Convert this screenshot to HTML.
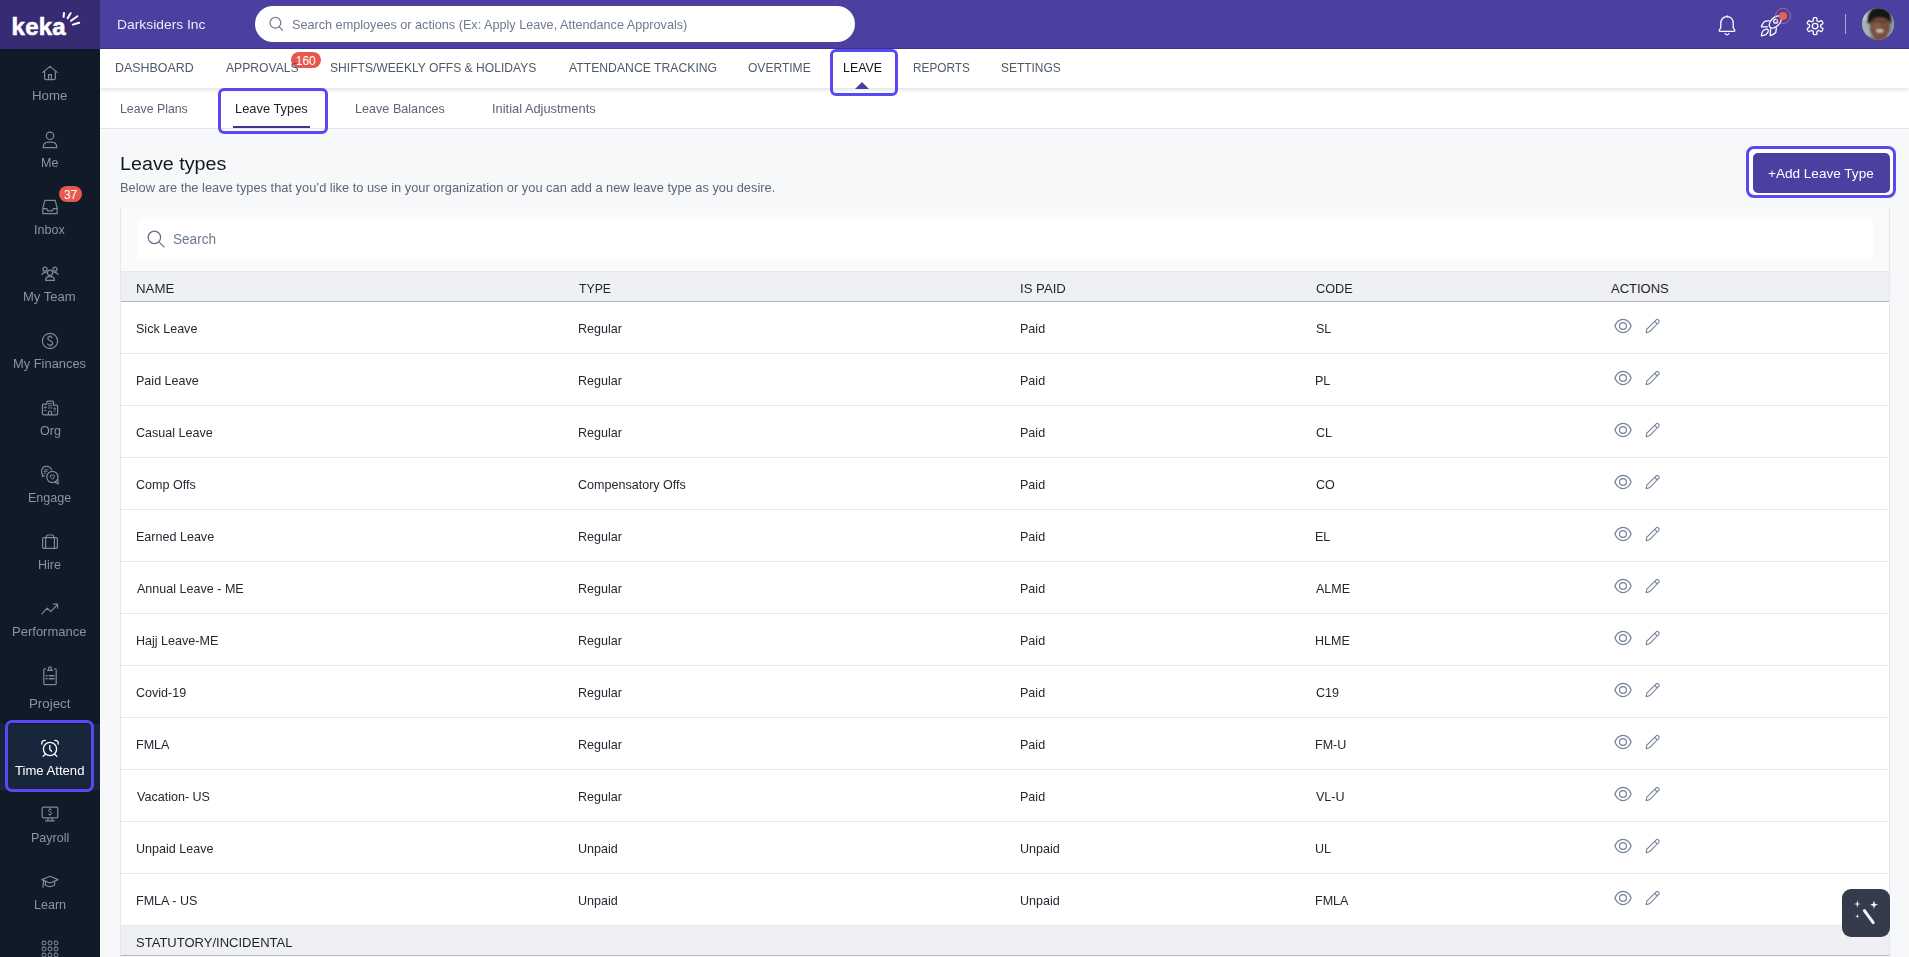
<!DOCTYPE html>
<html><head><meta charset="utf-8"><title>Keka - Leave Types</title>
<style>
html,body{margin:0;padding:0}
body{width:1909px;height:957px;overflow:hidden;position:relative;background:#f7f8fa;font-family:"Liberation Sans",sans-serif}
.a{position:absolute}
.t{position:absolute;white-space:nowrap;line-height:1;transform-origin:0 0;z-index:10}
.row{position:absolute;left:121px;width:1768px;height:51px;background:#fff;border-bottom:1px solid #e6e8ec}
.ic{position:absolute;overflow:visible}
.sb{position:absolute;overflow:visible}
</style></head><body>
<!-- ===== top bar ===== -->
<div class="a" style="left:0;top:0;width:100px;height:49px;background:#372c74;z-index:3"></div>
<div class="a" style="left:100px;top:0;width:1809px;height:48px;background:#4b3fa0;border-bottom:1px solid #3d3095;z-index:3"></div>
<!-- logo -->
<svg class="a" style="z-index:5;left:0;top:0" width="100" height="49" viewBox="0 0 100 49">
  <text x="11.6" y="35" font-family="Liberation Sans" font-weight="700" font-size="24" fill="#fff" stroke="#fff" stroke-width="0.6" letter-spacing="0.2">keka</text>
  <g stroke="#fff" stroke-width="2" stroke-linecap="round">
    <line x1="64" y1="13" x2="63.6" y2="16.8"/>
    <line x1="70.6" y1="13.2" x2="67.6" y2="18.2"/>
    <line x1="77.4" y1="16.2" x2="71" y2="20.8"/>
    <line x1="79.2" y1="22.8" x2="72.8" y2="24.6"/>
  </g>
</svg>
<!-- search -->
<div class="a" style="z-index:5;left:255px;top:6px;width:600px;height:36px;border-radius:18px;background:#fff"></div>
<svg class="a" style="z-index:5;left:266px;top:14px" width="22" height="22" viewBox="0 0 22 22">
  <circle cx="9.4" cy="8.8" r="5.4" fill="none" stroke="#6e7a8e" stroke-width="1.2"/>
  <line x1="13.3" y1="12.8" x2="16.6" y2="16.3" stroke="#6e7a8e" stroke-width="1.2" stroke-linecap="round"/>
</svg>
<!-- right icons -->
<svg class="a" style="z-index:5;left:1710px;top:8px" width="34" height="34" viewBox="0 0 34 34">
  <path d="M17 8.6 C12.6 8.6 10.8 12 10.8 15.6 L10.8 19.6 L9.4 22 Q8.6 23.4 10.2 23.4 L23.8 23.4 Q25.4 23.4 24.6 22 L23.2 19.6 L23.2 15.6 C23.2 12 21.4 8.6 17 8.6 Z" fill="none" stroke="#fff" stroke-width="1.3" stroke-linejoin="round"/>
  <path d="M15.2 25.6 Q17 28 18.8 25.6" fill="none" stroke="#fff" stroke-width="1.3" stroke-linecap="round"/>
  <line x1="17" y1="8" x2="17" y2="8.8" stroke="#fff" stroke-width="1.6" stroke-linecap="round"/>
</svg>
<svg class="a" style="z-index:5;left:1754px;top:4px" width="40" height="36" viewBox="0 0 40 36">
  <g fill="none" stroke="#fff" stroke-width="1.3" stroke-linejoin="round">
    <ellipse cx="21.3" cy="18" rx="7.4" ry="4.3" transform="rotate(-45 21.3 18)"/>
    <circle cx="21.6" cy="17.2" r="1.9"/>
    <path d="M15.6 16.6 L10.6 17.4 Q8.4 19.6 7.4 22.8 L13.8 22.8"/>
    <path d="M16.6 24.4 L16.2 31.6 Q19.4 30.6 21.8 28.4 L22.4 23.6"/>
    <path d="M7.4 31.8 C7.6 28.4 9.6 25.6 12.4 25.2 C14.2 25 14.6 26.6 14 28 C12.8 30.6 10.4 31.6 7.4 31.8 Z"/>
  </g>
  <circle cx="29" cy="11.9" r="7.6" fill="none" stroke="#e07575" stroke-opacity="0.7" stroke-width="1"/>
  <circle cx="29" cy="11.9" r="4" fill="#ec5f4f"/>
</svg>
<svg class="a" style="z-index:5;left:1801px;top:12px" width="28" height="28" viewBox="0 0 28 28">
  <path d="M14.10 5.65 L14.32 5.65 L14.54 5.66 L14.76 5.68 L14.98 5.71 L15.20 5.75 L15.41 5.81 L15.61 5.94 L15.78 6.18 L15.89 6.64 L15.91 7.34 L15.90 8.03 L15.92 8.49 L16.00 8.73 L16.11 8.86 L16.23 8.95 L16.36 9.02 L16.49 9.09 L16.62 9.15 L16.75 9.22 L16.88 9.29 L17.00 9.37 L17.12 9.44 L17.25 9.52 L17.37 9.60 L17.49 9.68 L17.63 9.74 L17.80 9.77 L18.05 9.72 L18.46 9.51 L19.05 9.15 L19.67 8.82 L20.12 8.68 L20.41 8.71 L20.62 8.82 L20.78 8.97 L20.93 9.14 L21.06 9.32 L21.19 9.50 L21.30 9.69 L21.42 9.88 L21.53 10.07 L21.63 10.26 L21.72 10.46 L21.81 10.67 L21.88 10.88 L21.93 11.09 L21.93 11.33 L21.80 11.60 L21.46 11.92 L20.86 12.29 L20.25 12.62 L19.87 12.87 L19.70 13.06 L19.64 13.22 L19.63 13.37 L19.63 13.52 L19.64 13.66 L19.64 13.81 L19.65 13.95 L19.65 14.10 L19.65 14.25 L19.64 14.39 L19.64 14.54 L19.63 14.68 L19.63 14.83 L19.64 14.98 L19.70 15.14 L19.87 15.33 L20.25 15.58 L20.86 15.91 L21.46 16.28 L21.80 16.60 L21.93 16.87 L21.93 17.11 L21.88 17.32 L21.81 17.53 L21.72 17.74 L21.63 17.94 L21.53 18.13 L21.42 18.32 L21.30 18.51 L21.19 18.70 L21.06 18.88 L20.93 19.06 L20.78 19.23 L20.62 19.38 L20.41 19.49 L20.12 19.52 L19.67 19.38 L19.05 19.05 L18.46 18.69 L18.05 18.48 L17.80 18.43 L17.63 18.46 L17.49 18.52 L17.37 18.60 L17.25 18.68 L17.12 18.76 L17.00 18.83 L16.88 18.91 L16.75 18.98 L16.62 19.05 L16.49 19.11 L16.36 19.18 L16.23 19.25 L16.11 19.34 L16.00 19.47 L15.92 19.71 L15.90 20.17 L15.91 20.86 L15.89 21.56 L15.78 22.02 L15.61 22.26 L15.41 22.39 L15.20 22.45 L14.98 22.49 L14.76 22.52 L14.54 22.54 L14.32 22.55 L14.10 22.55 L13.88 22.55 L13.66 22.54 L13.44 22.52 L13.22 22.49 L13.00 22.45 L12.79 22.39 L12.59 22.26 L12.42 22.02 L12.31 21.56 L12.29 20.86 L12.30 20.17 L12.28 19.71 L12.20 19.47 L12.09 19.34 L11.97 19.25 L11.84 19.18 L11.71 19.11 L11.58 19.05 L11.45 18.98 L11.33 18.91 L11.20 18.83 L11.08 18.76 L10.95 18.68 L10.83 18.60 L10.71 18.52 L10.57 18.46 L10.40 18.43 L10.15 18.48 L9.74 18.69 L9.15 19.05 L8.53 19.38 L8.08 19.52 L7.79 19.49 L7.58 19.38 L7.42 19.23 L7.27 19.06 L7.14 18.88 L7.01 18.70 L6.90 18.51 L6.78 18.33 L6.67 18.13 L6.57 17.94 L6.48 17.74 L6.39 17.53 L6.32 17.32 L6.27 17.11 L6.27 16.87 L6.40 16.60 L6.74 16.28 L7.34 15.91 L7.95 15.58 L8.33 15.33 L8.50 15.14 L8.56 14.98 L8.57 14.83 L8.57 14.68 L8.56 14.54 L8.56 14.39 L8.55 14.25 L8.55 14.10 L8.55 13.95 L8.56 13.81 L8.56 13.66 L8.57 13.52 L8.57 13.37 L8.56 13.22 L8.50 13.06 L8.33 12.87 L7.95 12.62 L7.34 12.29 L6.74 11.92 L6.40 11.60 L6.27 11.33 L6.27 11.09 L6.32 10.88 L6.39 10.67 L6.48 10.46 L6.57 10.26 L6.67 10.07 L6.78 9.88 L6.90 9.69 L7.01 9.50 L7.14 9.32 L7.27 9.14 L7.42 8.97 L7.58 8.82 L7.79 8.71 L8.08 8.68 L8.53 8.82 L9.15 9.15 L9.74 9.51 L10.15 9.72 L10.40 9.77 L10.57 9.74 L10.71 9.68 L10.83 9.60 L10.95 9.52 L11.08 9.44 L11.20 9.37 L11.33 9.29 L11.45 9.22 L11.58 9.15 L11.71 9.09 L11.84 9.02 L11.97 8.95 L12.09 8.86 L12.20 8.73 L12.28 8.49 L12.30 8.03 L12.29 7.34 L12.31 6.64 L12.42 6.18 L12.59 5.94 L12.79 5.81 L13.00 5.75 L13.22 5.71 L13.44 5.68 L13.66 5.66 L13.88 5.65 Z" fill="none" stroke="#fff" stroke-width="1.3" stroke-linejoin="round"/>
  <circle cx="14.1" cy="14.1" r="2.8" fill="none" stroke="#fff" stroke-width="1.3"/>
</svg>
<div class="a" style="z-index:5;left:1845px;top:14px;width:1px;height:20px;background:rgba(255,255,255,0.55)"></div>
<svg class="a" style="z-index:5;left:1862px;top:8px" width="32" height="32" viewBox="0 0 32 32">
  <defs><clipPath id="av"><circle cx="16" cy="16" r="16"/></clipPath>
  <filter id="bl" x="-20%" y="-20%" width="140%" height="140%"><feGaussianBlur stdDeviation="0.8"/></filter></defs>
  <g clip-path="url(#av)">
    <rect width="32" height="32" fill="#a4b2b8"/>
    <g filter="url(#bl)">
      <rect x="-2" y="-2" width="10" height="14" fill="#c2ccd0"/>
      <rect x="27" y="8" width="7" height="24" fill="#8c9aa0"/>
      <ellipse cx="18" cy="19.5" rx="10.2" ry="12.5" fill="#76503f"/>
      <ellipse cx="15" cy="18" rx="4" ry="5" fill="#86604c" opacity="0.7"/>
      <path d="M5.2 14 Q4 -1 18 -0.6 Q30.4 0 29.6 14.5 L28.2 16.5 Q27.4 9.6 18 9.4 Q9.2 9.6 8 16.5 Z" fill="#181413"/>
      <rect x="10" y="12.6" width="16" height="1.6" fill="#33231e" opacity="0.55"/>
      <ellipse cx="17.8" cy="23" rx="3.6" ry="1.4" fill="#ddd0c8"/>
      <path d="M6 28.5 Q18 33 30 28.5 L30 34 L6 34 Z" fill="#84532e"/>
    </g>
  </g>
</svg>

<!-- ===== sidebar ===== -->
<div class="a" style="left:0;top:49px;width:100px;height:908px;background:#111b27"></div>
<div class="a" style="left:0;top:724px;width:100px;height:66px;background:#17263a"></div>
<svg class="sb" style="left:0;top:49px" width="100" height="908" viewBox="0 49 100 908">
  <g fill="none" stroke="#7f8999" stroke-width="1.2" stroke-linejoin="round" stroke-linecap="round">
    <!-- home -->
    <path d="M42.8 72.4 L50 66.4 L57.2 72.4 M44.6 71 L44.6 78 Q44.6 79.6 46.2 79.6 L53.8 79.6 Q55.4 79.6 55.4 78 L55.4 71 M48.6 79.6 L48.6 74.6 L51.4 74.6 L51.4 79.6"/>
    <!-- me -->
    <circle cx="50" cy="135.8" r="3.7"/>
    <path d="M43.2 147.6 Q43.2 142.4 48.4 142.2 L51.6 142.2 Q56.8 142.4 56.8 147.6 Z"/>
    <!-- inbox -->
    <path d="M44.8 200.4 L55.2 200.4 L57.2 208.2 L57.2 213.6 L42.8 213.6 L42.8 208.2 Z M42.8 208.6 L46.6 208.6 L47.8 210.8 L52.2 210.8 L53.4 208.6 L57.2 208.6"/>
    <!-- my team -->
    <circle cx="45" cy="269.2" r="2"/><circle cx="55" cy="269.2" r="2"/><circle cx="50" cy="272.8" r="2.6"/>
    <path d="M45.6 280.4 Q45.6 276.8 49 276.6 L51 276.6 Q54.4 276.8 54.4 280.4 Z"/>
    <path d="M42 274.6 Q42.6 272.4 46 272.4 M58 274.6 Q57.4 272.4 54 272.4"/>
    <!-- finances -->
    <circle cx="50" cy="341" r="7.6"/>
    <path d="M52.2 337.6 Q51.4 336.6 50 336.6 Q47.8 336.6 47.8 338.4 Q47.8 339.8 50 340.6 Q52.6 341.4 52.6 343.2 Q52.6 345.2 50 345.2 Q48.4 345.2 47.6 344 M50 335.6 L50 336.6 M50 345.2 L50 346.2"/>
    <!-- org -->
    <path d="M46.8 404.2 L46.8 402.2 Q46.8 401.2 47.8 401.2 L52.6 401.2 Q53.6 401.2 53.6 402.2 L53.6 405.2 L56.4 405.2 Q57.6 405.2 57.6 406.4 L57.6 413.4 Q57.6 414.8 56.2 414.8 L43.8 414.8 Q42.4 414.8 42.4 413.4 L42.4 405.4 Q42.4 404.2 43.6 404.2 Z M48.4 414.8 L48.4 412.4 Q48.4 411 50 411 Q51.6 411 51.6 412.4 L51.6 414.8"/>
    <path d="M48.4 403.6 L52 403.6 M48.4 405.8 L52 405.8 M48.4 408 L52 408" stroke-width="0.9"/><circle cx="45.2" cy="407.4" r="0.9" stroke-width="0.9"/><path d="M44.2 410.6 L46.2 410.6" stroke-width="0.9"/><circle cx="54.6" cy="408.6" r="0.9" stroke-width="0.9"/><path d="M53.8 411.2 Q54.6 412.4 55.4 411.2" stroke-width="0.9"/>
    <!-- engage -->
    <path d="M51.6 469.8 Q50.4 466.4 46.6 466.4 Q41.6 466.4 41.6 471.4 Q41.6 473.6 42.6 474.8 L42.4 476.6 L44.4 475.8"/>
    <path d="M44.2 469.8 L48 469.8 M44.2 471.4 L47 471.4 M44.2 473.2 L45.6 473.2" stroke-width="0.9"/>
    <circle cx="52.4" cy="477" r="5.6"/>
    <path d="M58 479.4 L58.2 484 L55.2 482.4"/>
    <path d="M52.4 479 L50.6 477.2 Q49.8 476 50.8 475.2 Q51.8 474.6 52.4 475.6 Q53 474.6 54 475.2 Q55 476 54.2 477.2 Z" stroke-width="1"/>
    <!-- hire -->
    <path d="M46.4 537.6 L46.4 536 Q46.4 535 47.4 535 L52.6 535 Q53.6 535 53.6 536 L53.6 537.6"/>
    <path d="M43.6 537.6 L56.4 537.6 Q57.4 537.6 57.4 538.8 L57.4 547 Q57.4 548.4 56 548.4 L44 548.4 Q42.6 548.4 42.6 547 L42.6 538.8 Q42.6 537.6 43.6 537.6 Z M45.6 537.8 L45.6 548.2 M54.4 537.8 L54.4 548.2"/>
    <!-- performance -->
    <path d="M41.8 613.8 L47.2 608.2 L50.8 611.6 L57.4 604.6 M53.6 604.2 L57.6 604.2 L57.6 608.2"/>
    <!-- project -->
    <path d="M45.4 668.8 L44.6 668.8 Q43.8 668.8 43.8 669.8 L43.8 683.6 Q43.8 684.6 44.8 684.6 L55.2 684.6 Q56.2 684.6 56.2 683.6 L56.2 669.8 Q56.2 668.8 55.4 668.8 L54.6 668.8"/>
    <path d="M47.4 670.4 L52.6 670.4 M48.6 670.4 L48.6 668.2 Q48.6 666.8 50 666.8 Q51.4 666.8 51.4 668.2 L51.4 670.4"/>
    <path d="M46.2 675.8 L47 675.8 M49.2 675.8 L54 675.8 M46.2 678.8 L47 678.8 M49.2 678.8 L54 678.8" stroke-width="1.5"/>
    <!-- payroll -->
    <path d="M43.6 807.2 L56.4 807.2 Q57.8 807.2 57.8 808.6 L57.8 816.4 Q57.8 817.8 56.4 817.8 L43.6 817.8 Q42.2 817.8 42.2 816.4 L42.2 808.6 Q42.2 807.2 43.6 807.2 Z M48.4 818 L47.6 820.6 M51.6 818 L52.4 820.6 M45.6 820.8 L54.4 820.8"/>
    <path d="M51.4 809.8 Q50.8 809.2 50 809.2 Q48.6 809.2 48.6 810.4 Q48.6 811.4 50 811.8 Q51.6 812.2 51.6 813.4 Q51.6 814.6 50 814.6 Q49 814.6 48.4 814 M50 808.4 L50 809.2 M50 814.6 L50 815.4" stroke-width="1"/>
    <!-- learn -->
    <path d="M41.8 879.6 L50 876.2 L58 879.6 L50 883 Z"/>
    <path d="M45.4 881.4 L45.4 885 Q50 888.4 54.6 885 L54.6 881.4 M43.6 880.6 L43 887.2"/>
    <!-- grid -->
    <g stroke-width="1">
      <rect x="42.2" y="941.2" width="3.6" height="3.6" rx="0.8"/><rect x="48.2" y="941.2" width="3.6" height="3.6" rx="0.8"/><rect x="54.2" y="941.2" width="3.6" height="3.6" rx="0.8"/>
      <rect x="42.2" y="947.2" width="3.6" height="3.6" rx="0.8"/><rect x="48.2" y="947.2" width="3.6" height="3.6" rx="0.8"/><rect x="54.2" y="947.2" width="3.6" height="3.6" rx="0.8"/>
      <rect x="42.2" y="953.2" width="3.6" height="3.6" rx="0.8"/><rect x="48.2" y="953.2" width="3.6" height="3.6" rx="0.8"/><rect x="54.2" y="953.2" width="3.6" height="3.6" rx="0.8"/>
    </g>
  </g>
  <!-- time attend (active) -->
  <g fill="none" stroke="#ffffff" stroke-width="1.3" stroke-linecap="round">
    <circle cx="50" cy="749" r="6.6"/>
    <path d="M49.8 745.4 L49.8 749.4 L51.6 751.2"/>
    <path d="M41.8 744 Q41.4 740.4 45.2 740.4 M58.2 744 Q58.6 740.4 54.8 740.4 M45.4 754 L43.2 756.4 M54.6 754 L56.8 756.4"/>
  </g>
  <!-- badge -->
  <rect x="59" y="186" width="23" height="16" rx="8" fill="#e8584e"/>
</svg>
<!-- highlight box sidebar -->
<div class="a" style="left:5px;top:720px;width:83px;height:66px;border:3px solid #5a48f5;border-radius:7px"></div>

<!-- ===== nav row ===== -->
<div class="a" style="left:100px;top:49px;width:1809px;height:39px;background:#fff;box-shadow:0 1px 5px rgba(20,30,50,0.17);z-index:2"></div>
<div class="a" style="left:291px;top:52px;width:30px;height:16px;border-radius:8px;background:#e8584e;z-index:3"></div>
<div class="a" style="left:855px;top:82px;width:0;height:0;border-left:7px solid transparent;border-right:7px solid transparent;border-bottom:7px solid #4b3fa0;z-index:3"></div>
<div class="a" style="left:830px;top:49px;width:62px;height:41px;border:3px solid #5a48f5;border-radius:6px;z-index:6"></div>

<!-- ===== sub tabs ===== -->
<div class="a" style="left:100px;top:88px;width:1809px;height:40px;background:#fff;border-bottom:1px solid #e3e5e9;z-index:1"></div>
<div class="a" style="left:233px;top:126px;width:77px;height:2px;background:#3d3592;z-index:3"></div>
<div class="a" style="left:218px;top:88px;width:104px;height:40px;border:3px solid #5a48f5;border-radius:6px;z-index:4"></div>

<!-- ===== title / button ===== -->
<div class="a" style="left:1746px;top:146px;width:144px;height:46px;border:3px solid #5a48f5;border-radius:8px;background:#fff"></div>
<div class="a" style="left:1753px;top:153px;width:137px;height:40px;border-radius:5px;background:#4b3fa0"></div>

<!-- ===== table ===== -->
<div class="a" style="left:120px;top:207px;width:1768px;height:750px;background:#fafafb;border-left:1px solid #e4e6ea;border-right:1px solid #e4e6ea"></div>
<div class="a" style="left:137px;top:219px;width:1736px;height:40px;border-radius:4px;background:#fff"></div>
<svg class="a" style="left:144px;top:227px" width="24" height="24" viewBox="0 0 24 24">
  <circle cx="10.4" cy="10.4" r="6.2" fill="none" stroke="#5f6d84" stroke-width="1.25"/>
  <line x1="14.9" y1="14.9" x2="20" y2="19.9" stroke="#5f6d84" stroke-width="1.25" stroke-linecap="round"/>
</svg>
<div class="a" style="left:121px;top:271px;width:1768px;height:29px;background:#eff0f4;border-top:1px solid #e7e8ec;border-bottom:1px solid #b1b7c3"></div>
<div class="row" style="top:302px"></div>
<svg class="ic" style="left:1612px;top:315.8px" width="50" height="20" viewBox="0 0 50 20"><path d="M2.8 10 C4.8 5.4 7.8 3.4 11 3.4 C14.2 3.4 17.2 5.4 19.2 10 C17.2 14.6 14.2 16.6 11 16.6 C7.8 16.6 4.8 14.6 2.8 10 Z" fill="none" stroke="#75829a" stroke-width="1.2"/><circle cx="11" cy="10" r="3.4" fill="none" stroke="#75829a" stroke-width="1.2"/><path d="M34.2 16.8 L34.8 13.2 L44.2 3.8 Q45.2 2.8 46.2 3.8 L46.8 4.4 Q47.8 5.4 46.8 6.4 L37.4 15.8 Z M42.6 5.4 L45.2 8" fill="none" stroke="#75829a" stroke-width="1.1" stroke-linejoin="round"/></svg>
<div class="row" style="top:354px"></div>
<svg class="ic" style="left:1612px;top:367.8px" width="50" height="20" viewBox="0 0 50 20"><path d="M2.8 10 C4.8 5.4 7.8 3.4 11 3.4 C14.2 3.4 17.2 5.4 19.2 10 C17.2 14.6 14.2 16.6 11 16.6 C7.8 16.6 4.8 14.6 2.8 10 Z" fill="none" stroke="#75829a" stroke-width="1.2"/><circle cx="11" cy="10" r="3.4" fill="none" stroke="#75829a" stroke-width="1.2"/><path d="M34.2 16.8 L34.8 13.2 L44.2 3.8 Q45.2 2.8 46.2 3.8 L46.8 4.4 Q47.8 5.4 46.8 6.4 L37.4 15.8 Z M42.6 5.4 L45.2 8" fill="none" stroke="#75829a" stroke-width="1.1" stroke-linejoin="round"/></svg>
<div class="row" style="top:406px"></div>
<svg class="ic" style="left:1612px;top:419.8px" width="50" height="20" viewBox="0 0 50 20"><path d="M2.8 10 C4.8 5.4 7.8 3.4 11 3.4 C14.2 3.4 17.2 5.4 19.2 10 C17.2 14.6 14.2 16.6 11 16.6 C7.8 16.6 4.8 14.6 2.8 10 Z" fill="none" stroke="#75829a" stroke-width="1.2"/><circle cx="11" cy="10" r="3.4" fill="none" stroke="#75829a" stroke-width="1.2"/><path d="M34.2 16.8 L34.8 13.2 L44.2 3.8 Q45.2 2.8 46.2 3.8 L46.8 4.4 Q47.8 5.4 46.8 6.4 L37.4 15.8 Z M42.6 5.4 L45.2 8" fill="none" stroke="#75829a" stroke-width="1.1" stroke-linejoin="round"/></svg>
<div class="row" style="top:458px"></div>
<svg class="ic" style="left:1612px;top:471.8px" width="50" height="20" viewBox="0 0 50 20"><path d="M2.8 10 C4.8 5.4 7.8 3.4 11 3.4 C14.2 3.4 17.2 5.4 19.2 10 C17.2 14.6 14.2 16.6 11 16.6 C7.8 16.6 4.8 14.6 2.8 10 Z" fill="none" stroke="#75829a" stroke-width="1.2"/><circle cx="11" cy="10" r="3.4" fill="none" stroke="#75829a" stroke-width="1.2"/><path d="M34.2 16.8 L34.8 13.2 L44.2 3.8 Q45.2 2.8 46.2 3.8 L46.8 4.4 Q47.8 5.4 46.8 6.4 L37.4 15.8 Z M42.6 5.4 L45.2 8" fill="none" stroke="#75829a" stroke-width="1.1" stroke-linejoin="round"/></svg>
<div class="row" style="top:510px"></div>
<svg class="ic" style="left:1612px;top:523.8px" width="50" height="20" viewBox="0 0 50 20"><path d="M2.8 10 C4.8 5.4 7.8 3.4 11 3.4 C14.2 3.4 17.2 5.4 19.2 10 C17.2 14.6 14.2 16.6 11 16.6 C7.8 16.6 4.8 14.6 2.8 10 Z" fill="none" stroke="#75829a" stroke-width="1.2"/><circle cx="11" cy="10" r="3.4" fill="none" stroke="#75829a" stroke-width="1.2"/><path d="M34.2 16.8 L34.8 13.2 L44.2 3.8 Q45.2 2.8 46.2 3.8 L46.8 4.4 Q47.8 5.4 46.8 6.4 L37.4 15.8 Z M42.6 5.4 L45.2 8" fill="none" stroke="#75829a" stroke-width="1.1" stroke-linejoin="round"/></svg>
<div class="row" style="top:562px"></div>
<svg class="ic" style="left:1612px;top:575.8px" width="50" height="20" viewBox="0 0 50 20"><path d="M2.8 10 C4.8 5.4 7.8 3.4 11 3.4 C14.2 3.4 17.2 5.4 19.2 10 C17.2 14.6 14.2 16.6 11 16.6 C7.8 16.6 4.8 14.6 2.8 10 Z" fill="none" stroke="#75829a" stroke-width="1.2"/><circle cx="11" cy="10" r="3.4" fill="none" stroke="#75829a" stroke-width="1.2"/><path d="M34.2 16.8 L34.8 13.2 L44.2 3.8 Q45.2 2.8 46.2 3.8 L46.8 4.4 Q47.8 5.4 46.8 6.4 L37.4 15.8 Z M42.6 5.4 L45.2 8" fill="none" stroke="#75829a" stroke-width="1.1" stroke-linejoin="round"/></svg>
<div class="row" style="top:614px"></div>
<svg class="ic" style="left:1612px;top:627.8px" width="50" height="20" viewBox="0 0 50 20"><path d="M2.8 10 C4.8 5.4 7.8 3.4 11 3.4 C14.2 3.4 17.2 5.4 19.2 10 C17.2 14.6 14.2 16.6 11 16.6 C7.8 16.6 4.8 14.6 2.8 10 Z" fill="none" stroke="#75829a" stroke-width="1.2"/><circle cx="11" cy="10" r="3.4" fill="none" stroke="#75829a" stroke-width="1.2"/><path d="M34.2 16.8 L34.8 13.2 L44.2 3.8 Q45.2 2.8 46.2 3.8 L46.8 4.4 Q47.8 5.4 46.8 6.4 L37.4 15.8 Z M42.6 5.4 L45.2 8" fill="none" stroke="#75829a" stroke-width="1.1" stroke-linejoin="round"/></svg>
<div class="row" style="top:666px"></div>
<svg class="ic" style="left:1612px;top:679.8px" width="50" height="20" viewBox="0 0 50 20"><path d="M2.8 10 C4.8 5.4 7.8 3.4 11 3.4 C14.2 3.4 17.2 5.4 19.2 10 C17.2 14.6 14.2 16.6 11 16.6 C7.8 16.6 4.8 14.6 2.8 10 Z" fill="none" stroke="#75829a" stroke-width="1.2"/><circle cx="11" cy="10" r="3.4" fill="none" stroke="#75829a" stroke-width="1.2"/><path d="M34.2 16.8 L34.8 13.2 L44.2 3.8 Q45.2 2.8 46.2 3.8 L46.8 4.4 Q47.8 5.4 46.8 6.4 L37.4 15.8 Z M42.6 5.4 L45.2 8" fill="none" stroke="#75829a" stroke-width="1.1" stroke-linejoin="round"/></svg>
<div class="row" style="top:718px"></div>
<svg class="ic" style="left:1612px;top:731.8px" width="50" height="20" viewBox="0 0 50 20"><path d="M2.8 10 C4.8 5.4 7.8 3.4 11 3.4 C14.2 3.4 17.2 5.4 19.2 10 C17.2 14.6 14.2 16.6 11 16.6 C7.8 16.6 4.8 14.6 2.8 10 Z" fill="none" stroke="#75829a" stroke-width="1.2"/><circle cx="11" cy="10" r="3.4" fill="none" stroke="#75829a" stroke-width="1.2"/><path d="M34.2 16.8 L34.8 13.2 L44.2 3.8 Q45.2 2.8 46.2 3.8 L46.8 4.4 Q47.8 5.4 46.8 6.4 L37.4 15.8 Z M42.6 5.4 L45.2 8" fill="none" stroke="#75829a" stroke-width="1.1" stroke-linejoin="round"/></svg>
<div class="row" style="top:770px"></div>
<svg class="ic" style="left:1612px;top:783.8px" width="50" height="20" viewBox="0 0 50 20"><path d="M2.8 10 C4.8 5.4 7.8 3.4 11 3.4 C14.2 3.4 17.2 5.4 19.2 10 C17.2 14.6 14.2 16.6 11 16.6 C7.8 16.6 4.8 14.6 2.8 10 Z" fill="none" stroke="#75829a" stroke-width="1.2"/><circle cx="11" cy="10" r="3.4" fill="none" stroke="#75829a" stroke-width="1.2"/><path d="M34.2 16.8 L34.8 13.2 L44.2 3.8 Q45.2 2.8 46.2 3.8 L46.8 4.4 Q47.8 5.4 46.8 6.4 L37.4 15.8 Z M42.6 5.4 L45.2 8" fill="none" stroke="#75829a" stroke-width="1.1" stroke-linejoin="round"/></svg>
<div class="row" style="top:822px"></div>
<svg class="ic" style="left:1612px;top:835.8px" width="50" height="20" viewBox="0 0 50 20"><path d="M2.8 10 C4.8 5.4 7.8 3.4 11 3.4 C14.2 3.4 17.2 5.4 19.2 10 C17.2 14.6 14.2 16.6 11 16.6 C7.8 16.6 4.8 14.6 2.8 10 Z" fill="none" stroke="#75829a" stroke-width="1.2"/><circle cx="11" cy="10" r="3.4" fill="none" stroke="#75829a" stroke-width="1.2"/><path d="M34.2 16.8 L34.8 13.2 L44.2 3.8 Q45.2 2.8 46.2 3.8 L46.8 4.4 Q47.8 5.4 46.8 6.4 L37.4 15.8 Z M42.6 5.4 L45.2 8" fill="none" stroke="#75829a" stroke-width="1.1" stroke-linejoin="round"/></svg>
<div class="row" style="top:874px"></div>
<svg class="ic" style="left:1612px;top:887.8px" width="50" height="20" viewBox="0 0 50 20"><path d="M2.8 10 C4.8 5.4 7.8 3.4 11 3.4 C14.2 3.4 17.2 5.4 19.2 10 C17.2 14.6 14.2 16.6 11 16.6 C7.8 16.6 4.8 14.6 2.8 10 Z" fill="none" stroke="#75829a" stroke-width="1.2"/><circle cx="11" cy="10" r="3.4" fill="none" stroke="#75829a" stroke-width="1.2"/><path d="M34.2 16.8 L34.8 13.2 L44.2 3.8 Q45.2 2.8 46.2 3.8 L46.8 4.4 Q47.8 5.4 46.8 6.4 L37.4 15.8 Z M42.6 5.4 L45.2 8" fill="none" stroke="#75829a" stroke-width="1.1" stroke-linejoin="round"/></svg>
<div class="a" style="left:121px;top:926px;width:1768px;height:29px;background:#eff0f4;border-bottom:1px solid #b1b7c3"></div>

<!-- magic button -->
<div class="a" style="left:1842px;top:889px;width:48px;height:48px;border-radius:9px;background:#353b4a;z-index:5"></div>
<svg class="a" style="left:1842px;top:889px;z-index:6" width="48" height="48" viewBox="0 0 48 48">
  <line x1="22.4" y1="21.6" x2="31.2" y2="33.6" stroke="#f4f5f7" stroke-width="3" stroke-linecap="round"/>
  <path d="M15.3 11.2 L16 14.4 L19 15 L16 15.6 L15.3 18.8 L14.6 15.6 L11.6 15 L14.6 14.4 Z" fill="#fff"/>
  <path d="M32 11.6 L32.9 14.8 L36 15.8 L32.9 16.8 L32 20 L31.1 16.8 L28 15.8 L31.1 14.8 Z" fill="#fff"/>
  <path d="M15.3 24.8 L15.7 26.7 L17.4 27.2 L15.7 27.7 L15.3 29.6 L14.9 27.7 L13.2 27.2 L14.9 26.7 Z" fill="#fff"/>
</svg>

<div class="t" style="left:116.86px;top:17.57px;font-size:13.5px;color:#ecebf7;transform:scaleX(1.0258);">Darksiders Inc</div>
<div class="t" style="left:292.13px;top:17.79px;font-size:13px;color:#6e7a8e;transform:scaleX(0.9733);">Search employees or actions (Ex: Apply Leave, Attendance Approvals)</div>
<div class="t" style="left:115.38px;top:60.88px;font-size:13.6px;color:#4f5a68;transform:scaleX(0.9129);">DASHBOARD</div>
<div class="t" style="left:225.98px;top:60.88px;font-size:13.6px;color:#4f5a68;transform:scaleX(0.8923);">APPROVALS</div>
<div class="t" style="left:330.45px;top:60.88px;font-size:13.6px;color:#4f5a68;transform:scaleX(0.8896);">SHIFTS/WEEKLY OFFS &amp; HOLIDAYS</div>
<div class="t" style="left:568.98px;top:60.88px;font-size:13.6px;color:#4f5a68;transform:scaleX(0.8982);">ATTENDANCE TRACKING</div>
<div class="t" style="left:748.13px;top:60.88px;font-size:13.6px;color:#4f5a68;transform:scaleX(0.8861);">OVERTIME</div>
<div class="t" style="left:842.98px;top:60.88px;font-size:13.6px;color:#15171c;transform:scaleX(0.9144);">LEAVE</div>
<div class="t" style="left:912.73px;top:60.88px;font-size:13.6px;color:#4f5a68;transform:scaleX(0.8678);">REPORTS</div>
<div class="t" style="left:1001.36px;top:60.88px;font-size:13.6px;color:#4f5a68;transform:scaleX(0.8781);">SETTINGS</div>
<div class="t" style="left:295.77px;top:54.84px;font-size:12px;color:#ffffff;">160</div>
<div class="t" style="left:119.69px;top:101.99px;font-size:13px;color:#5b6573;transform:scaleX(0.9469);">Leave Plans</div>
<div class="t" style="left:234.94px;top:101.99px;font-size:13px;color:#1c2027;transform:scaleX(0.9906);">Leave Types</div>
<div class="t" style="left:354.76px;top:101.99px;font-size:13px;color:#5b6573;transform:scaleX(0.9706);">Leave Balances</div>
<div class="t" style="left:492.11px;top:101.99px;font-size:13px;color:#5b6573;transform:scaleX(0.9892);">Initial Adjustments</div>
<div class="t" style="left:119.68px;top:153.94px;font-size:19.2px;color:#141821;transform:scaleX(1.0277);">Leave types</div>
<div class="t" style="left:119.95px;top:182.08px;font-size:12.9px;color:#5b6676;transform:scaleX(0.9961);">Below are the leave types that you’d like to use in your organization or you can add a new leave type as you desire.</div>
<div class="t" style="left:1768.14px;top:166.84px;font-size:13.3px;color:#ffffff;transform:scaleX(1.0202);">+Add Leave Type</div>
<div class="t" style="left:173.08px;top:232.15px;font-size:14px;color:#6b7891;transform:scaleX(0.9693);">Search</div>
<div class="t" style="left:135.91px;top:281.99px;font-size:13px;color:#1f242c;transform:scaleX(1.0213);">NAME</div>
<div class="t" style="left:578.52px;top:281.99px;font-size:13px;color:#1f242c;transform:scaleX(0.9425);">TYPE</div>
<div class="t" style="left:1019.79px;top:281.99px;font-size:13px;color:#1f242c;transform:scaleX(1.0127);">IS PAID</div>
<div class="t" style="left:1315.75px;top:281.99px;font-size:13px;color:#1f242c;transform:scaleX(0.9796);">CODE</div>
<div class="t" style="left:1610.97px;top:281.99px;font-size:13px;color:#1f242c;">ACTIONS</div>
<div class="t" style="left:136.43px;top:322.19px;font-size:13px;color:#232832;transform:scaleX(0.9650);">Sick Leave</div>
<div class="t" style="left:577.77px;top:322.19px;font-size:13px;color:#232832;transform:scaleX(0.9650);">Regular</div>
<div class="t" style="left:1019.97px;top:322.19px;font-size:13px;color:#232832;transform:scaleX(0.9650);">Paid</div>
<div class="t" style="left:1315.83px;top:322.19px;font-size:13px;color:#232832;transform:scaleX(0.9650);">SL</div>
<div class="t" style="left:135.97px;top:374.19px;font-size:13px;color:#232832;transform:scaleX(0.9650);">Paid Leave</div>
<div class="t" style="left:577.77px;top:374.19px;font-size:13px;color:#232832;transform:scaleX(0.9650);">Regular</div>
<div class="t" style="left:1019.97px;top:374.19px;font-size:13px;color:#232832;transform:scaleX(0.9650);">Paid</div>
<div class="t" style="left:1315.37px;top:374.19px;font-size:13px;color:#232832;transform:scaleX(0.9650);">PL</div>
<div class="t" style="left:136.36px;top:426.19px;font-size:13px;color:#232832;transform:scaleX(0.9650);">Casual Leave</div>
<div class="t" style="left:577.77px;top:426.19px;font-size:13px;color:#232832;transform:scaleX(0.9650);">Regular</div>
<div class="t" style="left:1019.97px;top:426.19px;font-size:13px;color:#232832;transform:scaleX(0.9650);">Paid</div>
<div class="t" style="left:1315.76px;top:426.19px;font-size:13px;color:#232832;transform:scaleX(0.9650);">CL</div>
<div class="t" style="left:136.36px;top:478.19px;font-size:13px;color:#232832;transform:scaleX(0.9650);">Comp Offs</div>
<div class="t" style="left:578.16px;top:478.19px;font-size:13px;color:#232832;transform:scaleX(0.9650);">Compensatory Offs</div>
<div class="t" style="left:1019.97px;top:478.19px;font-size:13px;color:#232832;transform:scaleX(0.9650);">Paid</div>
<div class="t" style="left:1315.76px;top:478.19px;font-size:13px;color:#232832;transform:scaleX(0.9650);">CO</div>
<div class="t" style="left:135.97px;top:530.19px;font-size:13px;color:#232832;transform:scaleX(0.9650);">Earned Leave</div>
<div class="t" style="left:577.77px;top:530.19px;font-size:13px;color:#232832;transform:scaleX(0.9650);">Regular</div>
<div class="t" style="left:1019.97px;top:530.19px;font-size:13px;color:#232832;transform:scaleX(0.9650);">Paid</div>
<div class="t" style="left:1315.37px;top:530.19px;font-size:13px;color:#232832;transform:scaleX(0.9650);">EL</div>
<div class="t" style="left:136.98px;top:582.19px;font-size:13px;color:#232832;transform:scaleX(0.9650);">Annual Leave - ME</div>
<div class="t" style="left:577.77px;top:582.19px;font-size:13px;color:#232832;transform:scaleX(0.9650);">Regular</div>
<div class="t" style="left:1019.97px;top:582.19px;font-size:13px;color:#232832;transform:scaleX(0.9650);">Paid</div>
<div class="t" style="left:1316.38px;top:582.19px;font-size:13px;color:#232832;transform:scaleX(0.9650);">ALME</div>
<div class="t" style="left:135.97px;top:634.19px;font-size:13px;color:#232832;transform:scaleX(0.9650);">Hajj Leave-ME</div>
<div class="t" style="left:577.77px;top:634.19px;font-size:13px;color:#232832;transform:scaleX(0.9650);">Regular</div>
<div class="t" style="left:1019.97px;top:634.19px;font-size:13px;color:#232832;transform:scaleX(0.9650);">Paid</div>
<div class="t" style="left:1315.37px;top:634.19px;font-size:13px;color:#232832;transform:scaleX(0.9650);">HLME</div>
<div class="t" style="left:136.36px;top:686.19px;font-size:13px;color:#232832;transform:scaleX(0.9650);">Covid-19</div>
<div class="t" style="left:577.77px;top:686.19px;font-size:13px;color:#232832;transform:scaleX(0.9650);">Regular</div>
<div class="t" style="left:1019.97px;top:686.19px;font-size:13px;color:#232832;transform:scaleX(0.9650);">Paid</div>
<div class="t" style="left:1315.76px;top:686.19px;font-size:13px;color:#232832;transform:scaleX(0.9650);">C19</div>
<div class="t" style="left:135.97px;top:738.19px;font-size:13px;color:#232832;transform:scaleX(0.9650);">FMLA</div>
<div class="t" style="left:577.77px;top:738.19px;font-size:13px;color:#232832;transform:scaleX(0.9650);">Regular</div>
<div class="t" style="left:1019.97px;top:738.19px;font-size:13px;color:#232832;transform:scaleX(0.9650);">Paid</div>
<div class="t" style="left:1315.37px;top:738.19px;font-size:13px;color:#232832;transform:scaleX(0.9650);">FM-U</div>
<div class="t" style="left:136.94px;top:790.19px;font-size:13px;color:#232832;transform:scaleX(0.9650);">Vacation- US</div>
<div class="t" style="left:577.77px;top:790.19px;font-size:13px;color:#232832;transform:scaleX(0.9650);">Regular</div>
<div class="t" style="left:1019.97px;top:790.19px;font-size:13px;color:#232832;transform:scaleX(0.9650);">Paid</div>
<div class="t" style="left:1316.34px;top:790.19px;font-size:13px;color:#232832;transform:scaleX(0.9650);">VL-U</div>
<div class="t" style="left:136.03px;top:842.19px;font-size:13px;color:#232832;transform:scaleX(0.9650);">Unpaid Leave</div>
<div class="t" style="left:577.83px;top:842.19px;font-size:13px;color:#232832;transform:scaleX(0.9650);">Unpaid</div>
<div class="t" style="left:1020.03px;top:842.19px;font-size:13px;color:#232832;transform:scaleX(0.9650);">Unpaid</div>
<div class="t" style="left:1315.43px;top:842.19px;font-size:13px;color:#232832;transform:scaleX(0.9650);">UL</div>
<div class="t" style="left:135.97px;top:894.19px;font-size:13px;color:#232832;transform:scaleX(0.9650);">FMLA - US</div>
<div class="t" style="left:577.83px;top:894.19px;font-size:13px;color:#232832;transform:scaleX(0.9650);">Unpaid</div>
<div class="t" style="left:1020.03px;top:894.19px;font-size:13px;color:#232832;transform:scaleX(0.9650);">Unpaid</div>
<div class="t" style="left:1315.37px;top:894.19px;font-size:13px;color:#232832;transform:scaleX(0.9650);">FMLA</div>
<div class="t" style="left:136.41px;top:936.39px;font-size:13px;color:#1f242c;transform:scaleX(1.0017);">STATUTORY/INCIDENTAL</div>
<div class="t" style="left:32.06px;top:89.19px;font-size:13px;color:#8a94a2;transform:scaleX(1.0202);">Home</div>
<div class="t" style="left:41.05px;top:155.99px;font-size:13px;color:#8a94a2;transform:scaleX(0.9650);">Me</div>
<div class="t" style="left:34.14px;top:222.99px;font-size:13px;color:#8a94a2;transform:scaleX(0.9650);">Inbox</div>
<div class="t" style="left:23.48px;top:289.99px;font-size:13px;color:#8a94a2;transform:scaleX(1.0018);">My Team</div>
<div class="t" style="left:13.19px;top:356.99px;font-size:13px;color:#8a94a2;transform:scaleX(0.9909);">My Finances</div>
<div class="t" style="left:39.65px;top:423.99px;font-size:13px;color:#8a94a2;transform:scaleX(0.9650);">Org</div>
<div class="t" style="left:28.14px;top:490.99px;font-size:13px;color:#8a94a2;transform:scaleX(0.9650);">Engage</div>
<div class="t" style="left:38.26px;top:557.99px;font-size:13px;color:#8a94a2;transform:scaleX(0.9650);">Hire</div>
<div class="t" style="left:12.48px;top:625.29px;font-size:13px;color:#8a94a2;transform:scaleX(1.0017);">Performance</div>
<div class="t" style="left:28.81px;top:696.99px;font-size:13px;color:#8a94a2;transform:scaleX(1.0229);">Project</div>
<div class="t" style="left:15.21px;top:764.39px;font-size:13px;color:#ffffff;transform:scaleX(1.0077);">Time Attend</div>
<div class="t" style="left:30.73px;top:830.99px;font-size:13px;color:#8a94a2;transform:scaleX(0.9650);">Payroll</div>
<div class="t" style="left:33.85px;top:897.99px;font-size:13px;color:#8a94a2;transform:scaleX(0.9650);">Learn</div>
<div class="t" style="left:63.90px;top:188.84px;font-size:12px;color:#ffffff;">37</div>
</body></html>
